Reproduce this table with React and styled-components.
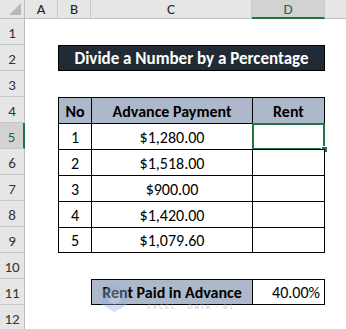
import React from "react";
import styled, { createGlobalStyle } from "styled-components";

const FONT = `Carlito, Calibri, "Liberation Sans Narrow", Lato, sans-serif`;

const Global = createGlobalStyle`
  html, body { margin: 0; padding: 0; background: #fff; }
  body { font-family: ${FONT}; }
`;

const Sheet = styled.div`
  position: relative;
  width: 346px;
  height: 329px;
  overflow: hidden;
  display: grid;
  grid-template-columns: 25px 33px 33px 161px 73px 60px;
  grid-template-rows: 19px repeat(12, 26px);
  font-family: ${FONT};
  color: #000;
`;

const Corner = styled.div`
  position: relative;
  background: #e6e6e6;
  border-right: 1px solid #bdbdbd;
  border-bottom: 1px solid #bdbdbd;
  box-sizing: border-box;
  &::after {
    content: "";
    position: absolute;
    right: 3px;
    bottom: 3px;
    width: 0;
    height: 0;
    border-left: 12px solid transparent;
    border-bottom: 12px solid #b8b8b8;
  }
`;

const ColHeader = styled.div`
  box-sizing: border-box;
  background: ${(p) => (p.$active ? "#d2d2d2" : "#e6e6e6")};
  border-right: 1px solid #c8c8c8;
  border-bottom: ${(p) => (p.$active ? "2px solid #217346" : "1px solid #bdbdbd")};
  display: flex;
  align-items: center;
  justify-content: center;
  font-size: 15px;
  color: ${(p) => (p.$active ? "#1e6b41" : "#222")};
  padding-top: ${(p) => (p.$active ? "1px" : "0")};
`;

const RowHeader = styled.div`
  box-sizing: border-box;
  background: ${(p) => (p.$active ? "#d2d2d2" : "#e6e6e6")};
  border-right: ${(p) => (p.$active ? "2px solid #217346" : "1px solid #bdbdbd")};
  border-bottom: 1px solid #c8c8c8;
  display: flex;
  align-items: flex-end;
  justify-content: center;
  padding-bottom: 2px;
  font-size: 15px;
  color: ${(p) => (p.$active ? "#1e6b41" : "#333")};
`;

const Blank = styled.div``;

const Title = styled.div`
  grid-column: 3 / 6;
  box-sizing: border-box;
  background: #222b35;
  border: 1px solid #000;
  color: #fff;
  font-weight: 700;
  font-size: 17px;
  display: flex;
  align-items: center;
  justify-content: center;
  padding-top: 1px;
`;

const Cell = styled.div`
  position: relative;
  box-sizing: border-box;
  background: ${(p) => (p.$head ? "#adb9ca" : "#fff")};
  border-left: 1px solid #000;
  border-top: 1px solid #000;
  border-right: ${(p) => (p.$lastCol ? "1px solid #000" : "none")};
  border-bottom: ${(p) => (p.$lastRow ? "1px solid #000" : "none")};
  font-weight: ${(p) => (p.$head ? 700 : 400)};
  font-size: 16px;
  display: flex;
  align-items: center;
  justify-content: ${(p) => (p.$right ? "flex-end" : "center")};
  padding: ${(p) => (p.$right ? "1px 4px 0 0" : "1px 0 0 0")};
`;

const Selection = styled.div`
  position: absolute;
  left: -1px;
  top: -1px;
  right: -1px;
  bottom: -1px;
  border: 2px solid #217346;
  pointer-events: none;
  &::after {
    content: "";
    position: absolute;
    right: -5px;
    bottom: -5px;
    width: 5px;
    height: 5px;
    background: #217346;
    border: 1px solid #fff;
  }
`;

const Watermark = styled.div`
  position: absolute;
  left: 101px;
  top: 282px;
  display: flex;
  align-items: flex-end;
  pointer-events: none;
  opacity: 0.4;
`;

const WmSub = styled.div`
  font-family: "Noto Sans", sans-serif;
  font-size: 7px;
  font-weight: 600;
  color: #8e9fba;
  letter-spacing: 1.8px;
  margin-left: 19px;
  margin-bottom: 2px;
  white-space: nowrap;
`;

const cols = ["A", "B", "C", "D", ""];

const rows = [
  ["1", "$1,280.00"],
  ["2", "$1,518.00"],
  ["3", "$900.00"],
  ["4", "$1,420.00"],
  ["5", "$1,079.60"],
];

export default function App() {
  return (
    <>
      <Global />
      <Sheet>
        <Corner />
        {cols.map((c, i) => (
          <ColHeader key={i} $active={c === "D"}>
            {c}
          </ColHeader>
        ))}

        <RowHeader>1</RowHeader>
        <Blank /><Blank /><Blank /><Blank /><Blank />

        <RowHeader>2</RowHeader>
        <Blank />
        <Title>Divide a Number by a Percentage</Title>
        <Blank />

        <RowHeader>3</RowHeader>
        <Blank /><Blank /><Blank /><Blank /><Blank />

        <RowHeader>4</RowHeader>
        <Blank />
        <Cell $head>No</Cell>
        <Cell $head>Advance Payment</Cell>
        <Cell $head $lastCol>Rent</Cell>
        <Blank />

        {rows.map(([n, v], i) => {
          const last = i === rows.length - 1;
          return (
            <React.Fragment key={n}>
              <RowHeader $active={i === 0}>{i + 5}</RowHeader>
              <Blank />
              <Cell $lastRow={last}>{n}</Cell>
              <Cell $lastRow={last}>{v}</Cell>
              <Cell $lastRow={last} $lastCol>
                {i === 0 && <Selection />}
              </Cell>
              <Blank />
            </React.Fragment>
          );
        })}

        <RowHeader>10</RowHeader>
        <Blank /><Blank /><Blank /><Blank /><Blank />

        <RowHeader>11</RowHeader>
        <Blank />
        <Blank />
        <Cell $head $lastRow>Rent Paid in Advance</Cell>
        <Cell $lastRow $lastCol $right>40.00%</Cell>
        <Blank />

        <RowHeader>12</RowHeader>
        <Blank /><Blank /><Blank /><Blank /><Blank />

        <Watermark>
          <svg width="27" height="31" viewBox="0 0 26 30">
            <polygon points="13,1 25,8 25,22 13,29 1,22 1,8" fill="#8fb0dc" />
            <polygon points="13,8 19,11.5 19,18.5 13,22 7,18.5 7,11.5" fill="#c9d8ee" />
          </svg>
          <WmSub>EXCEL · DATA · BI</WmSub>
        </Watermark>
      </Sheet>
    </>
  );
}
